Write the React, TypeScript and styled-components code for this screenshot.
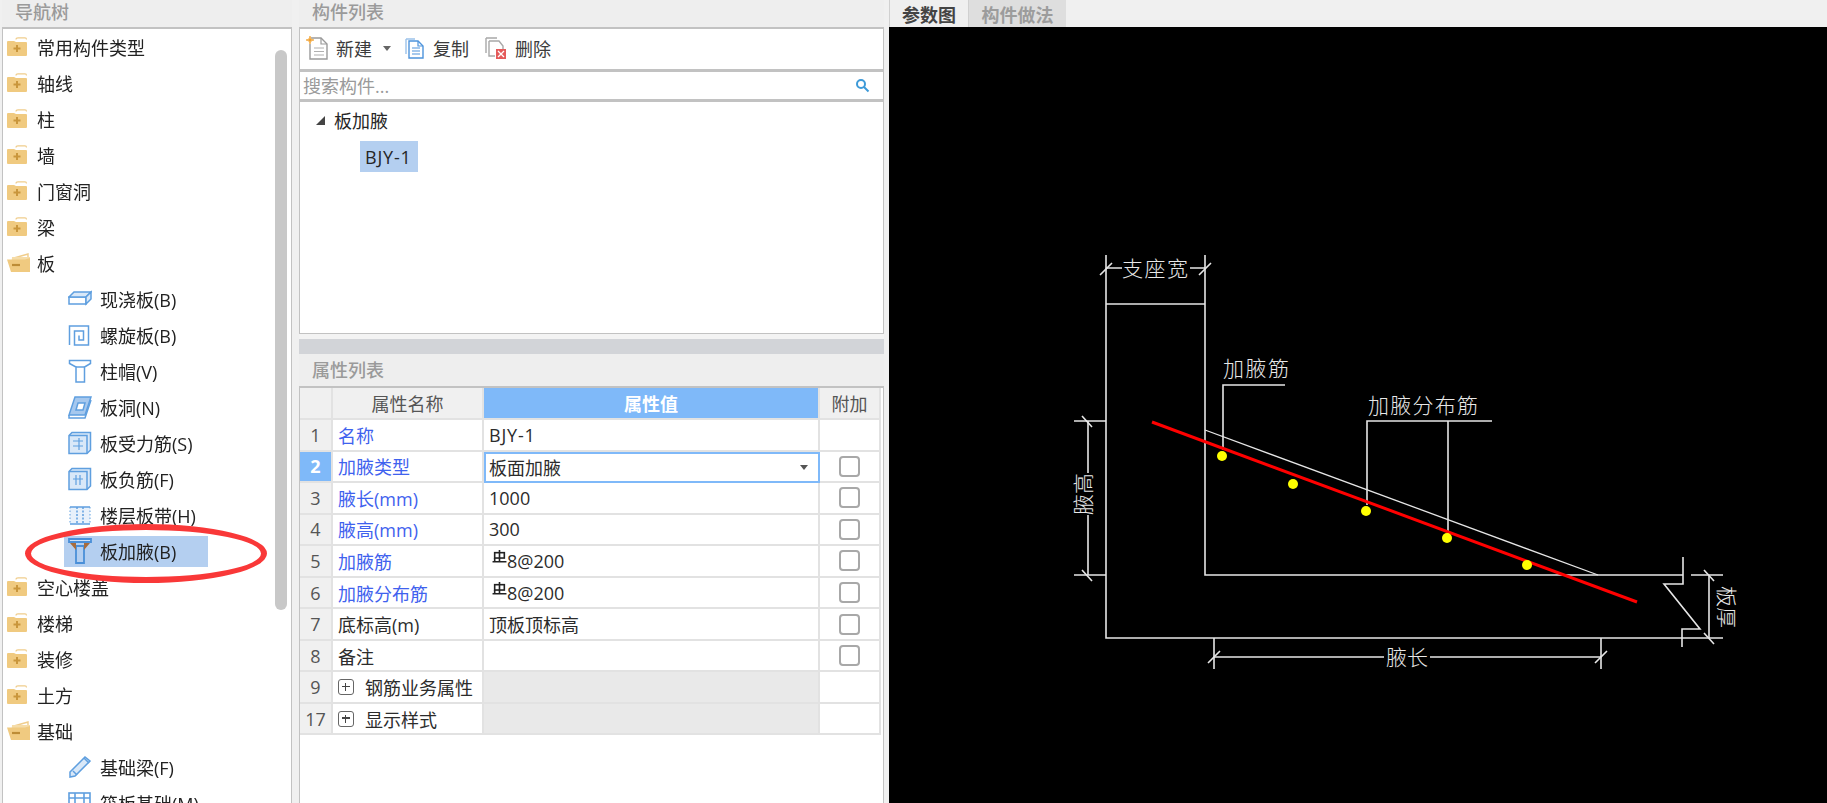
import React from 'react';
import styled, { createGlobalStyle } from 'styled-components';

const GlobalStyle = createGlobalStyle`
  html, body {
    margin: 0;
    padding: 0;
    background: #f0f0f0;
  }
  * {
    box-sizing: border-box;
  }
`;

const FONT = `"Open Sans", "Noto Sans CJK SC", sans-serif`;
const BORDER = '#c2c2c2';
const CELL_LINE = '#e2e2e2';

const Page = styled.div`
  display: flex;
  width: 1827px;
  height: 803px;
  overflow: hidden;
  padding-left: 2px;
  gap: 5px;
  font-family: ${FONT};
  font-size: 18px;
  color: #262626;
  filter: blur(0.4px);
`;

const NavPanel = styled.div`
  position: relative;
  display: flex;
  flex-direction: column;
  flex: 0 0 290px;
  margin-right: 2px;
  overflow: hidden;
`;

const MiddlePanel = styled.div`
  display: flex;
  flex-direction: column;
  flex: 0 0 585px;
  overflow: hidden;
`;

const PanelTitle = styled.div`
  flex: 0 0 29px;
  display: flex;
  align-items: center;
  padding: 0 13px 6px;
  height: 29px;
  background: #eeeeee;
  border-bottom: 2px solid ${BORDER};
  color: #9a9a9a;
  font-weight: 500;
`;

const NavBody = styled.div`
  flex: 1;
  background: #fff;
  border-left: 1px solid ${BORDER};
  border-right: 1px solid ${BORDER};
`;

const NavRow = styled.div<{ $child?: boolean }>`
  display: flex;
  align-items: center;
  height: 36px;
  padding-left: ${({ $child }) => ($child ? '61px' : '3px')};
`;

const NavIconBox = styled.span<{ $child?: boolean }>`
  display: flex;
  align-items: center;
  justify-content: ${({ $child }) => ($child ? 'center' : 'flex-start')};
  flex: 0 0 30px;
  height: 31px;
  padding-left: ${({ $child }) => ($child ? '2px' : '0')};
`;

const NavLabel = styled.span<{ $child?: boolean }>`
  white-space: nowrap;
  padding-left: ${({ $child }) => ($child ? '6px' : '1px')};
  color: #222;
`;

const ActiveGroup = styled.span<{ $active?: boolean }>`
  display: flex;
  align-items: center;
  height: 31px;
  padding-right: 32px;
  background: ${({ $active }) => ($active ? '#b4cff0' : 'transparent')};
`;

const Scrollbar = styled.div`
  position: absolute;
  left: 273px;
  top: 50px;
  width: 12px;
  height: 560px;
  border-radius: 6px;
  background: #c8c8c8;
`;

const RedEllipse = styled.div`
  position: absolute;
  left: 23px;
  top: 524px;
  width: 242px;
  height: 59px;
  border: 6px solid #f93838;
  border-radius: 50%;
`;

const Toolbar = styled.div`
  flex: 0 0 40px;
  display: flex;
  align-items: center;
  gap: 14px;
  padding: 0 0 2px 6px;
  background: #fff;
  border-left: 1px solid ${BORDER};
  border-right: 1px solid ${BORDER};
`;

const ToolButton = styled.div`
  display: flex;
  align-items: center;
  gap: 8px;
  color: #3c3c3c;
`;

const Caret = styled.span`
  width: 0;
  height: 0;
  margin-left: 3px;
  border-left: 4px solid transparent;
  border-right: 4px solid transparent;
  border-top: 5px solid #666;
`;

const SearchBar = styled.div`
  flex: 0 0 32px;
  display: flex;
  align-items: center;
  justify-content: space-between;
  padding: 0 13px 1px 3px;
  background: #fff;
  border: 1px solid ${BORDER};
  border-top-width: 3px;
  border-bottom-width: 3px;
  color: #9a9a9a;
`;

const TreeArea = styled.div`
  flex: 0 0 232px;
  background: #fff;
  border: 1px solid ${BORDER};
  border-top: 0;
`;

const TreeGroup = styled.div`
  display: flex;
  align-items: center;
  gap: 9px;
  height: 36px;
  padding-left: 16px;
`;

const TreeArrow = styled.span`
  width: 0;
  height: 0;
  border-bottom: 9px solid #444;
  border-left: 9px solid transparent;
`;

const TreeLeaf = styled.div`
  display: flex;
  align-items: center;
  width: 58px;
  height: 31px;
  margin: 3px 0 0 60px;
  padding-left: 5px;
  background: #b4cff0;
`;

const Code = styled.span`
  letter-spacing: 0.8px;
`;

const SplitGap = styled.div`
  flex: 0 0 5px;
  background: #f3f3f3;
`;

const GreyBar = styled.div`
  flex: 0 0 15px;
  background: #d2d4d8;
`;

const PropsTitle = styled(PanelTitle)`
  flex: 0 0 34px;
  height: 34px;
  padding-bottom: 3px;
`;

const PropsBody = styled.div`
  flex: 1;
  background: #fff;
  padding: 0 2px 0 0;
  border-left: 1px solid ${BORDER};
  border-right: 1px solid ${BORDER};
`;

const TableRow = styled.div<{ $height?: number }>`
  display: grid;
  grid-template-columns: 33px 151px 336px 61px;
  height: ${({ $height }) => $height ?? 31.55}px;
`;

const Cell = styled.div<{ $align?: string; $fill?: string; $color?: string; $weight?: number }>`
  display: flex;
  align-items: center;
  justify-content: ${({ $align }) => $align ?? 'flex-start'};
  padding-left: ${({ $align }) => ($align ? '0' : '5px')};
  background: ${({ $fill }) => $fill ?? '#fff'};
  color: ${({ $color }) => $color ?? '#2c2c2c'};
  font-weight: ${({ $weight }) => $weight ?? 400};
  border-right: 2px solid ${CELL_LINE};
  border-bottom: 2px solid ${CELL_LINE};
  white-space: nowrap;
  min-width: 0;
`;

const NumCell = styled(Cell)<{ $selected?: boolean }>`
  justify-content: center;
  padding-left: 0;
  background: ${({ $selected }) => ($selected ? '#7fb9f9' : '#f0f0f0')};
  color: ${({ $selected }) => ($selected ? '#fff' : '#555')};
  font-weight: ${({ $selected }) => ($selected ? 700 : 400)};
`;

const EditCell = styled(Cell)`
  justify-content: space-between;
  padding: 0 10px 0 3px;
  border: 2px solid #7fb9f9;
`;

const SelectCaret = styled.span`
  width: 0;
  height: 0;
  border-left: 4px solid transparent;
  border-right: 4px solid transparent;
  border-top: 5px solid #555;
`;

const Check = styled.span`
  width: 21px;
  height: 21px;
  border: 2px solid #a8a8a8;
  border-radius: 4px;
  background: #fff;
`;

const Expand = styled.span`
  position: relative;
  flex: 0 0 16px;
  height: 16px;
  margin-right: 11px;
  border: 1.5px solid #666;
  border-radius: 3px;
  &::before {
    content: '';
    position: absolute;
    left: 3px;
    right: 3px;
    top: 5.5px;
    height: 1.5px;
    background: #444;
  }
  &::after {
    content: '';
    position: absolute;
    top: 3px;
    bottom: 3px;
    left: 5.5px;
    width: 1.5px;
    background: #444;
  }
`;

const RightPanel = styled.div`
  flex: 1;
  display: flex;
  flex-direction: column;
  min-width: 0;
`;

const TabBar = styled.div`
  flex: 0 0 27px;
  display: flex;
  background: #f0f0f0;
`;

const Tab = styled.div<{ $active?: boolean }>`
  display: flex;
  align-items: center;
  justify-content: center;
  width: ${({ $active }) => ($active ? '79px' : '98px')};
  background: ${({ $active }) => ($active ? '#efefef' : '#dedede')};
  color: ${({ $active }) => ($active ? '#444' : '#9c9c9c')};
  font-weight: 700;
  border-left: 1px solid #d0d0d0;
`;

const Canvas = styled.div`
  flex: 1;
  background: #000;
  min-height: 0;
`;

const Drawing = styled.svg`
  display: block;
  width: 100%;
  height: 100%;
`;

const CadLabel = styled.text`
  fill: #e8e8e8;
  font-family: "Noto Sans CJK SC", sans-serif;
  font-size: 21px;
  font-weight: 300;
`;

const FolderClosed = () => (
  <svg width="22" height="20" viewBox="0 0 22 20">
    <path d="M10 2.5 Q10 .8 12 .8 H19 Q20.5 .8 20.5 2.5" fill="none" stroke="#f0cd8c" strokeWidth="1.2" />
    <path d="M1 5 Q1 4 2 4 H8 L10 5 H20 Q21 5 21 6 V18 Q21 19 20 19 H2 Q1 19 1 18 Z" fill="#f0ca80" />
    <path d="M11 8 V15 M7.5 11.5 H14.5" stroke="#c9963c" strokeWidth="2" />
  </svg>
);

const FolderOpen = () => (
  <svg width="26" height="20" viewBox="0 0 26 20">
    <path d="M8 5 L22 1 V4" fill="none" stroke="#f0cd8c" strokeWidth="1.4" />
    <path d="M6 4 H24 V19 H5 Z" fill="#f5dca8" />
    <path d="M1 6.5 H19 L24 5 V19 H5 Z" fill="#f0ca80" />
    <path d="M6 12 H14" stroke="#bd8c36" strokeWidth="2.2" />
  </svg>
);

const STROKE = '#5f9fdf';
const TINT = '#d9e8f8';

const SlabIcon = () => (
  <svg width="24" height="24" viewBox="0 0 24 24" fill={TINT} stroke={STROKE} strokeWidth="1.5">
    <path d="M1 10 H18 V17 H1 Z" fill="#fff" />
    <path d="M1 10 L6 5 H23 L18 10 Z" />
    <path d="M18 10 L23 5 V12 L18 17 Z" />
  </svg>
);

const SpiralIcon = () => (
  <svg width="24" height="24" viewBox="0 0 24 24" fill="none" stroke={STROKE} strokeWidth="1.5">
    <path d="M1.5 22 V3 H20.5 V22 H6.5 V8 H15.5 V17 H11 V12.5" />
  </svg>
);

const CapIcon = () => (
  <svg width="24" height="24" viewBox="0 0 24 24" fill="#fff" stroke={STROKE} strokeWidth="1.5">
    <path d="M1.5 1.5 H22.5 V4.5 L16.5 8 V23 H8 V8 L1.5 4.5 Z" />
    <path d="M8 8 H16.5" />
  </svg>
);

const HoleIcon = () => (
  <svg width="24" height="24" viewBox="0 0 24 24" fill={TINT} stroke={STROKE} strokeWidth="1.5">
    <path d="M7 2 H23 L17 20 H1 Z" fill="#a6c8ee" />
    <path d="M10 8 H17 L15 15 H8 Z" fill="#fff" />
    <path d="M1 20 V23 H17 L23 5" fill="none" />
  </svg>
);

const BarIcon = ({ negative }: { negative?: boolean }) => (
  <svg width="24" height="24" viewBox="0 0 24 24" fill={TINT} stroke={STROKE} strokeWidth="1.5">
    <path d="M4 1.5 H22.5 V19 L19 22.5 H1 V4.5 Z" />
    <path d="M1 4.5 H19 V22.5" fill="none" />
    {negative ? (
      <path d="M5 12 H15 M8 8 V18 M12 8 V18" fill="none" strokeWidth="1.2" />
    ) : (
      <path d="M5 10 H15 M5 15 H15 M11 7 V19" fill="none" strokeWidth="1.2" />
    )}
  </svg>
);

const BandIcon = () => (
  <svg width="24" height="24" viewBox="0 0 24 24" fill="none" stroke={STROKE} strokeWidth="1.5">
    <rect x="2" y="4" width="20" height="17" fill="#e8f1fb" stroke="none" />
    <path d="M2 4 H22 M2 21 H22" />
    <path d="M9 4 V21 M15 4 V21" strokeDasharray="2 1.5" />
    <path d="M2 4 V21 M22 4 V21" strokeDasharray="1.5 2" strokeWidth="1" />
  </svg>
);

const HaunchIcon = () => (
  <svg width="24" height="26" viewBox="0 0 24 26" fill="#fff" stroke="#4a8fd8" strokeWidth="1.8">
    <path d="M8 8 H16 V25 H8 Z" fill="#b4cff0" />
    <path d="M1 1 H23 V4 H1 Z" fill="#cfe2f7" />
    <path d="M2 5 H8 V12 Z M22 5 H16 V12 Z" fill="#a86c3c" stroke="none" />
  </svg>
);

const BeamIcon = () => (
  <svg width="24" height="24" viewBox="0 0 24 24" fill={TINT} stroke={STROKE} strokeWidth="1.5">
    <path d="M2 17 L17 2 L22 6 L7 21 L2 22 Z" />
    <path d="M16 3 L21 8 M5 16 L9 20" fill="none" />
  </svg>
);

const RaftIcon = () => (
  <svg width="24" height="24" viewBox="0 0 24 24" fill="#fff" stroke={STROKE} strokeWidth="1.6">
    <rect x="1" y="2" width="21" height="20" />
    <path d="M1 7 H22 M7 2 V7 M16 2 V7 M7 7 V22 M16 7 V22" fill="none" />
  </svg>
);

const ICONS: Record<string, React.ReactNode> = {
  slab: <SlabIcon />,
  spiral: <SpiralIcon />,
  cap: <CapIcon />,
  hole: <HoleIcon />,
  bar: <BarIcon />,
  neg: <BarIcon negative />,
  band: <BandIcon />,
  haunch: <HaunchIcon />,
  beam: <BeamIcon />,
  raft: <RaftIcon />,
};

type NavItem = { label: string; open?: boolean; icon?: string; active?: boolean };

const NAV_ITEMS: NavItem[] = [
  { label: '常用构件类型' },
  { label: '轴线' },
  { label: '柱' },
  { label: '墙' },
  { label: '门窗洞' },
  { label: '梁' },
  { label: '板', open: true },
  { label: '现浇板(B)', icon: 'slab' },
  { label: '螺旋板(B)', icon: 'spiral' },
  { label: '柱帽(V)', icon: 'cap' },
  { label: '板洞(N)', icon: 'hole' },
  { label: '板受力筋(S)', icon: 'bar' },
  { label: '板负筋(F)', icon: 'neg' },
  { label: '楼层板带(H)', icon: 'band' },
  { label: '板加腋(B)', icon: 'haunch', active: true },
  { label: '空心楼盖' },
  { label: '楼梯' },
  { label: '装修' },
  { label: '土方' },
  { label: '基础', open: true },
  { label: '基础梁(F)', icon: 'beam' },
  { label: '筏板基础(M)', icon: 'raft' },
];

const NewIcon = () => (
  <svg width="22" height="24" viewBox="0 0 22 24" fill="none">
    <path d="M5 2 H15 L21 8 V23 H4 V8" fill="#fff" stroke="#9a9a9a" strokeWidth="1.4" />
    <path d="M15 2 V8 H21" stroke="#9a9a9a" strokeWidth="1.2" />
    <path d="M8 12 H18 M8 15.5 H18 M8 19 H18" stroke="#b0b0b0" strokeWidth="1.2" />
    <path d="M4 0 L5 3 L8 4 L5 5 L4 8 L3 5 L0 4 L3 3 Z" fill="#f0a030" stroke="#f5b860" strokeWidth="1" />
  </svg>
);

const CopyIcon = () => (
  <svg width="20" height="24" viewBox="0 0 20 24" fill="none" stroke="#4e94dc" strokeWidth="1.4">
    <path d="M1 3 H10 M1 3 V18" stroke="#9cc2ea" />
    <path d="M4 5 H13 L18 10 V22 H4 Z" fill="#fff" />
    <path d="M13 5 V10 H18" strokeWidth="1.2" />
    <path d="M7 12 H15 M7 15 H15 M7 18 H15" strokeWidth="1.2" />
  </svg>
);

const DeleteIcon = () => (
  <svg width="24" height="24" viewBox="-2 0 24 24" fill="none" stroke="#a8a8a8" strokeWidth="1.4">
    <path d="M1 2 H12 M1 2 V17" />
    <path d="M4 5 H14 L18 10 V14 M4 5 V20 H10" fill="#fff" />
    <rect x="11" y="13" width="10" height="10" fill="#e45a5a" stroke="none" />
    <path d="M13 15 L19 21 M19 15 L13 21" stroke="#fff" strokeWidth="1.3" />
  </svg>
);

const SearchIcon = () => (
  <svg width="15" height="15" viewBox="0 0 15 15" fill="none" stroke="#3d9ad8" strokeWidth="2">
    <circle cx="6" cy="6" r="4" />
    <path d="M9 9 L13.5 13.5" />
  </svg>
);

const RebarMark = () => (
  <svg width="15" height="15" viewBox="0 0 14 14" fill="none" stroke="#222" strokeWidth="1.5">
    <rect x="2.5" y="2.5" width="9" height="5" />
    <path d="M7 0 V11 M0.5 11 H13.5 M2.5 7.5 V11" />
  </svg>
);

const Rebar = styled.span`
  display: flex;
  align-items: flex-start;
  margin-left: 3px;
`;

const RebarMarkBox = styled.span`
  display: flex;
  margin-top: 1px;
`;

type Prop = {
  num: number;
  name: string;
  value?: string;
  rebar?: boolean;
  blue?: boolean;
  check?: boolean;
  group?: boolean;
  editing?: boolean;
};

const PROPS: Prop[] = [
  { num: 1, name: '名称', value: 'BJY-1', blue: true },
  { num: 2, name: '加腋类型', value: '板面加腋', blue: true, check: true, editing: true },
  { num: 3, name: '腋长(mm)', value: '1000', blue: true, check: true },
  { num: 4, name: '腋高(mm)', value: '300', blue: true, check: true },
  { num: 5, name: '加腋筋', value: '8@200', rebar: true, blue: true, check: true },
  { num: 6, name: '加腋分布筋', value: '8@200', rebar: true, blue: true, check: true },
  { num: 7, name: '底标高(m)', value: '顶板顶标高', check: true },
  { num: 8, name: '备注', check: true },
  { num: 9, name: '钢筋业务属性', group: true },
  { num: 17, name: '显示样式', group: true },
];

const PropRow = ({ prop }: { prop: Prop }) => (
  <TableRow>
    <NumCell $selected={prop.editing}>{prop.num}</NumCell>
    <Cell $color={prop.blue ? '#3f62ee' : '#2c2c2c'}>
      {prop.group && <Expand />}
      {prop.name}
    </Cell>
    {prop.editing ? (
      <EditCell>
        {prop.value}
        <SelectCaret />
      </EditCell>
    ) : prop.group ? (
      <Cell $fill="#e9e9e9" />
    ) : prop.rebar ? (
      <Cell>
        <Rebar>
          <RebarMarkBox>
            <RebarMark />
          </RebarMarkBox>
          {prop.value}
        </Rebar>
      </Cell>
    ) : (
      <Cell>{prop.num === 1 ? <Code>{prop.value}</Code> : prop.value}</Cell>
    )}
    <Cell $align="center">{prop.check && <Check />}</Cell>
  </TableRow>
);

const WHITE_LINES = [
  'M1106 255 V638 H1723',
  'M1106 304 H1205',
  'M1205 255 V575 H1683',
  'M1106 268 H1122 M1190 268 H1205',
  'M1100 275 L1112 263 M1199 275 L1211 263',
  'M1223 450 V385 H1285',
  'M1367 505 V421 H1492',
  'M1448 535 V421',
  'M1074 421 H1106 M1074 575 H1106',
  'M1088 421 V473 M1088 515 V575',
  'M1082 416 L1092 427 M1082 570 L1092 581',
  'M1214 638 V669 M1601 638 V669',
  'M1214 657 H1384 M1430 657 H1601',
  'M1208 663 L1220 651 M1595 663 L1607 651',
  'M1683 557 V584 H1664 L1700 629 H1682 V647',
  'M1691 575 H1723 M1709 575 V638',
  'M1704 570 L1714 581 M1704 633 L1714 644',
];

const POINTS = [
  [1222, 456],
  [1293, 484],
  [1366, 511],
  [1447, 538],
  [1527, 565],
];

const HaunchDrawing = () => (
  <Drawing viewBox="889 27 938 776">
    <g fill="none" stroke="#e6e6e6" strokeWidth="1.6">
      {WHITE_LINES.map((d) => (
        <path key={d} d={d} />
      ))}
      <path d="M1205 430 L1598 575" strokeWidth="1.3" />
    </g>
    <path d="M1152 422 L1637 602" stroke="#ff0000" strokeWidth="3" />
    {POINTS.map(([cx, cy]) => (
      <circle key={cx} cx={cx} cy={cy} r="5" fill="#ffff00" />
    ))}
    <CadLabel x="1122" y="276" textLength="66">支座宽</CadLabel>
    <CadLabel x="1223" y="376" textLength="66">加腋筋</CadLabel>
    <CadLabel x="1368" y="413" textLength="110">加腋分布筋</CadLabel>
    <CadLabel x="1386" y="665" textLength="42">腋长</CadLabel>
    <CadLabel transform="rotate(-90 1091 515)" x="1091" y="515" textLength="42">腋高</CadLabel>
    <CadLabel transform="rotate(90 1719 586)" x="1719" y="586" textLength="42">板厚</CadLabel>
  </Drawing>
);

export default function App() {
  return (
    <>
      <GlobalStyle />
      <Page>
        <NavPanel>
          <PanelTitle>导航树</PanelTitle>
          <NavBody>
            {NAV_ITEMS.map((item) => (
              <NavRow key={item.label} $child={!!item.icon}>
                {item.icon ? (
                  <ActiveGroup $active={item.active}>
                    <NavIconBox $child>{ICONS[item.icon]}</NavIconBox>
                    <NavLabel $child>{item.label}</NavLabel>
                  </ActiveGroup>
                ) : (
                  <>
                    <NavIconBox>{item.open ? <FolderOpen /> : <FolderClosed />}</NavIconBox>
                    <NavLabel>{item.label}</NavLabel>
                  </>
                )}
              </NavRow>
            ))}
          </NavBody>
          <Scrollbar />
          <RedEllipse />
        </NavPanel>

        <MiddlePanel>
          <PanelTitle>构件列表</PanelTitle>
          <Toolbar>
            <ToolButton>
              <NewIcon />
              新建
              <Caret />
            </ToolButton>
            <ToolButton>
              <CopyIcon />
              复制
            </ToolButton>
            <ToolButton>
              <DeleteIcon />
              删除
            </ToolButton>
          </Toolbar>
          <SearchBar>
            搜索构件...
            <SearchIcon />
          </SearchBar>
          <TreeArea>
            <TreeGroup>
              <TreeArrow />
              板加腋
            </TreeGroup>
            <TreeLeaf>
              <Code>BJY-1</Code>
            </TreeLeaf>
          </TreeArea>
          <SplitGap />
          <GreyBar />
          <PropsTitle>属性列表</PropsTitle>
          <PropsBody>
            <TableRow $height={32}>
              <NumCell />
              <Cell $align="center" $fill="#f0f0f0" $color="#555">属性名称</Cell>
              <Cell $align="center" $fill="#7fb9f9" $color="#fff" $weight={700}>属性值</Cell>
              <Cell $align="center" $fill="#f0f0f0" $color="#555">附加</Cell>
            </TableRow>
            {PROPS.map((prop) => (
              <PropRow key={prop.num} prop={prop} />
            ))}
          </PropsBody>
        </MiddlePanel>

        <RightPanel>
          <TabBar>
            <Tab $active>参数图</Tab>
            <Tab>构件做法</Tab>
          </TabBar>
          <Canvas>
            <HaunchDrawing />
          </Canvas>
        </RightPanel>
      </Page>
    </>
  );
}
